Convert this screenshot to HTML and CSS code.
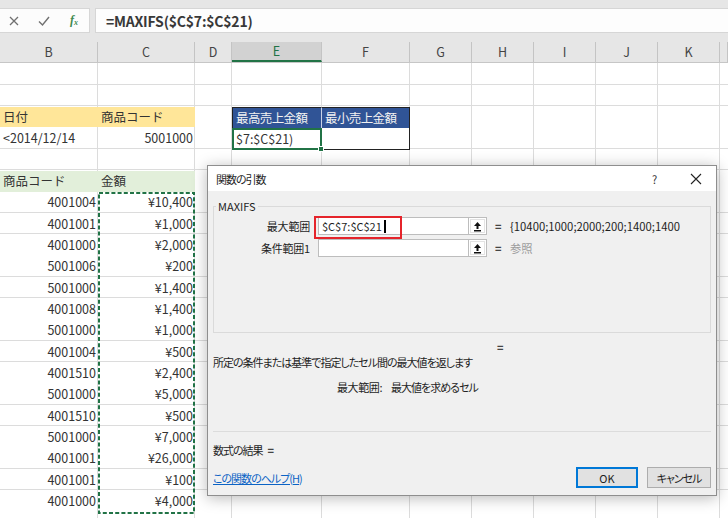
FILE: index.html
```html
<!DOCTYPE html>
<html lang="ja">
<head>
<meta charset="utf-8">
<title>関数の引数</title>
<link rel="stylesheet" href="styles.css">
</head>
<body>
<div class="app">
  <div class="fbar">
    <div class="fbtns">
      <svg class="ico" width="12" height="12" viewBox="0 0 12 12"><path d="M2 2L10 10M10 2L2 10" stroke="#707070" stroke-width="1.3" fill="none"/></svg>
      <svg class="ico" width="14" height="12" viewBox="0 0 14 12"><path d="M2 6.5L5.5 10L12 2" stroke="#707070" stroke-width="1.4" fill="none"/></svg>
      <span class="fx">f<sub>x</sub></span>
    </div>
    <div class="finput">=MAXIFS($C$7:$C$21)</div>
  </div>

  <div class="colhead">
    <div class="h">B</div><div class="h">C</div><div class="h">D</div><div class="h sel">E</div><div class="h">F</div><div class="h">G</div><div class="h">H</div><div class="h">I</div><div class="h">J</div><div class="h">K</div><div class="h"></div>
  </div>

  <div class="sheet">
    <div class="row"></div>
    <div class="row"></div>
    <div class="row">
      <div class="c yel">日付</div><div class="c yel">商品コード</div>
      <div class="c e blue b-tl">最高売上金額</div><div class="c blue b-tr">最小売上金額</div>
    </div>
    <div class="row">
      <div class="c">&lt;2014/12/14</div><div class="c num">5001000</div>
      <div class="c e active">$7:$C$21)<span class="handle"></span></div><div class="c boxed"></div>
    </div>
    <div class="row"></div>
    <div class="row">
      <div class="c grn">商品コード</div><div class="c grn">金額</div>
    </div>
    <div class="row"><div class="c num">4001004</div><div class="c num">¥10,400</div></div>
    <div class="row"><div class="c num">4001001</div><div class="c num">¥1,000</div></div>
    <div class="row"><div class="c num">4001000</div><div class="c num">¥2,000</div></div>
    <div class="row"><div class="c num">5001006</div><div class="c num">¥200</div></div>
    <div class="row"><div class="c num">5001000</div><div class="c num">¥1,400</div></div>
    <div class="row"><div class="c num">4001008</div><div class="c num">¥1,400</div></div>
    <div class="row"><div class="c num">5001000</div><div class="c num">¥1,000</div></div>
    <div class="row"><div class="c num">4001004</div><div class="c num">¥500</div></div>
    <div class="row"><div class="c num">4001510</div><div class="c num">¥2,400</div></div>
    <div class="row"><div class="c num">5001000</div><div class="c num">¥5,000</div></div>
    <div class="row"><div class="c num">4001510</div><div class="c num">¥500</div></div>
    <div class="row"><div class="c num">5001000</div><div class="c num">¥7,000</div></div>
    <div class="row"><div class="c num">4001001</div><div class="c num">¥26,000</div></div>
    <div class="row"><div class="c num">4001001</div><div class="c num">¥100</div></div>
    <div class="row"><div class="c num">4001000</div><div class="c num">¥4,000</div></div>
    <div class="row"></div>

    <svg class="ants" width="97" height="322" viewBox="0 0 97 322">
      <rect x="1" y="1" width="95" height="320" fill="none" stroke="#217346" stroke-width="2" stroke-dasharray="4 2.2"/>
    </svg>
  </div>

  <div class="dialog">
    <div class="dtitle">
      <span class="ttext jp">関数の引数</span>
      <span class="help">?</span>
      <svg class="close" width="12" height="12" viewBox="0 0 12 12"><path d="M1 1L11 11M11 1L1 11" stroke="#222" stroke-width="1.1" fill="none"/></svg>
    </div>
    <div class="dbody">
      <fieldset class="group">
        <legend>MAXIFS</legend>
        <div class="arg">
          <span class="alabel">最大範囲</span>
          <div class="field"><span class="ftext">$C$7:$C$21</span><span class="caret"></span></div>
          <span class="refbtn"><svg width="9" height="11" viewBox="0 0 9 11"><path d="M4.5 1L8 5H5.5V8H3.5V5H1Z" fill="#111"/><rect x="1" y="9" width="7" height="1.5" fill="#111"/></svg></span>
          <span class="eq">=</span>
          <span class="aval">{10400;1000;2000;200;1400;1400</span>
        </div>
        <div class="arg">
          <span class="alabel">条件範囲1</span>
          <div class="field"></div>
          <span class="refbtn"><svg width="9" height="11" viewBox="0 0 9 11"><path d="M4.5 1L8 5H5.5V8H3.5V5H1Z" fill="#111"/><rect x="1" y="9" width="7" height="1.5" fill="#111"/></svg></span>
          <span class="eq">=</span>
          <span class="aval muted">参照</span>
        </div>
      </fieldset>
      <div class="loneeq">=</div>
      <p class="desc jp">所定の条件または基準で指定したセル間の最大値を返します</p>
      <p class="argdesc"><span class="adname">最大範囲:</span><span class="jp">最大値を求めるセル</span></p>
      <div class="sep"></div>
      <p class="result"><span class="jp">数式の結果</span><span class="req">=</span></p>
      <div class="footer">
        <a class="helplink jp" href="#">この関数のヘルプ(H)</a>
        <span class="btn ok">OK</span>
        <span class="btn jp">キャンセル</span>
      </div>
    </div>
    <div class="redbox"></div>
  </div>
</div>
</body>
</html>
```

FILE: styles.css
```css
* { box-sizing: border-box; margin: 0; padding: 0; }
html, body { width: 728px; height: 518px; overflow: hidden; }
body {
  background: #fff;
  font-family: "Noto Sans CJK JP", "Noto Sans", sans-serif;
  color: #333;
}
.app { position: relative; display: flex; flex-direction: column; height: 518px; }

/* formula bar */
.fbar {
  flex: none;
  height: 42px;
  background: #e6e6e6;
  display: flex;
  gap: 5px;
  padding: 8px 0 9px 0;
}
.fbtns {
  width: 90px;
  background: #fcfcfc;
  border: 1px solid #d6d6d6;
  border-left: none;
  display: flex;
  align-items: center;
  padding-left: 8px;
  gap: 17px;
}
.fx {
  font-family: "Liberation Serif", serif;
  font-style: italic;
  font-size: 12px;
  color: #3f8a4f;
  font-weight: bold;
  margin-left: 2px;
}
.fx sub { font-size: 8px; vertical-align: -1px; }
.finput {
  flex: 1;
  background: #fdfdfd;
  border: 1px solid #d6d6d6;
  border-right: none;
  display: flex;
  align-items: center;
  padding-left: 10px;
  font-size: 14px;
  font-weight: bold;
  color: #383838;
  letter-spacing: -0.2px;
}

/* column header */
.colhead {
  flex: none;
  height: 21px;
  display: grid;
  grid-template-columns: 98px 97px 37px 90px 88px 62px 62px 62px 62px 62px 8px;
  background: #e6e6e6;
  border-bottom: 1px solid #c6c6c6;
}
.h {
  border-right: 1px solid #c4c4c4;
  font-size: 12.5px;
  line-height: 20px;
  text-align: center;
  color: #444;
}
.h.sel {
  background: #d2d2d2;
  color: #217346;
  border-bottom: 2px solid #217346;
  line-height: 18px;
}

/* sheet */
.sheet {
  position: relative;
  flex: 1;
  min-height: 0;
  overflow: hidden;
  display: flex;
  flex-direction: column;
  padding-top: 1px;
  background:
    linear-gradient(#dcdcdc, #dcdcdc) 97px 0 / 1px 100% no-repeat,
    linear-gradient(#dcdcdc, #dcdcdc) 194px 0 / 1px 100% no-repeat,
    linear-gradient(#dcdcdc, #dcdcdc) 231px 0 / 1px 100% no-repeat,
    linear-gradient(#dcdcdc, #dcdcdc) 321px 0 / 1px 100% no-repeat,
    linear-gradient(#dcdcdc, #dcdcdc) 409px 0 / 1px 100% no-repeat,
    linear-gradient(#dcdcdc, #dcdcdc) 471px 0 / 1px 100% no-repeat,
    linear-gradient(#dcdcdc, #dcdcdc) 533px 0 / 1px 100% no-repeat,
    linear-gradient(#dcdcdc, #dcdcdc) 595px 0 / 1px 100% no-repeat,
    linear-gradient(#dcdcdc, #dcdcdc) 657px 0 / 1px 100% no-repeat,
    linear-gradient(#dcdcdc, #dcdcdc) 719px 0 / 1px 100% no-repeat,
    repeating-linear-gradient(to bottom,
      transparent 0 22px, #dcdcdc 22px 23px,
      transparent 23px 43px, #dcdcdc 43px 44px,
      transparent 44px 64px, #dcdcdc 64px 65px) 0 -1px / 100% 64px;
}
.row {
  flex: none;
  height: 21px;
  display: grid;
  grid-template-columns: 98px 97px 37px 90px 88px 62px 62px 62px 62px 62px 8px;
}
.row:nth-child(3n+1) { height: 22px; }
.c {
  font-size: 12.5px;
  line-height: 20px;
  padding: 0 3px;
  white-space: nowrap;
  overflow: hidden;
  color: #333;
}
.num { text-align: right; padding-right: 2px; }
.e { grid-column: 4; }
.yel { background: #ffe699; margin-bottom: 1px; }
.grn { background: #e2efda; }
.blue {
  background: #305496;
  color: #f2f2f2;
  border-top: 1px solid #222;
  letter-spacing: -0.6px;
}
.b-tl { border-left: 1px solid #222; border-right: 1px solid #c9d3e6; }
.b-tr { border-right: 1px solid #222; }
.active {
  position: relative;
  overflow: visible;
  background: #fff;
  border: 2px solid #217346;
  line-height: 17px;
  padding-left: 2px;
}
.handle {
  position: absolute;
  right: -4px;
  bottom: -4px;
  width: 6px;
  height: 6px;
  background: #217346;
  border: 1px solid #fff;
}
.boxed {
  background: #fff;
  border-right: 1px solid #222;
  border-bottom: 1px solid #222;
}
.ants {
  position: absolute;
  left: 98px;
  top: 129px;
}

/* dialog */
.dialog {
  position: absolute;
  left: 207px;
  top: 165px;
  width: 510px;
  height: 331px;
  background: #f0f0f0;
  border: 1px solid #8e8e8e;
  box-shadow: 0 2px 14px rgba(0, 0, 0, 0.28);
  display: flex;
  flex-direction: column;
  font-size: 11px;
  font-feature-settings: "palt";
  color: #1e1e1e;
}
.jp { letter-spacing: -1px; }
.dtitle {
  height: 25px;
  background: #fff;
  display: flex;
  align-items: center;
  padding-left: 8px;
  font-size: 11px;
}
.ttext { flex: 1; }
.help { font-size: 11px; width: 12px; margin-right: 26px; color: #333; }
.close { margin-right: 14px; }
.dbody {
  flex: 1;
  display: flex;
  flex-direction: column;
  padding: 0 5px;
}
.group {
  margin-top: 9px;
  height: 133px;
  border: 1px solid #dadada;
  padding: 0;
}
.group legend {
  margin-left: 2px;
  padding: 0 2px;
  font-size: 11px;
  line-height: 12px;
}
.arg {
  display: flex;
  align-items: center;
  height: 18px;
  margin-top: 4px;
}
.arg:first-of-type { margin-top: 5px; }
.alabel { width: 97px; text-align: right; padding-right: 1px; letter-spacing: -0.2px; }
.field {
  margin-left: 7px;
  width: 150px;
  height: 18px;
  background: #fff;
  border: 1px solid #bdbdbd;
  border-right: none;
  display: flex;
  align-items: center;
  padding-left: 3px;
  font-size: 11px;
}
.caret { width: 2px; height: 13px; background: #000; margin-left: 2px; }
.refbtn {
  width: 19px;
  height: 18px;
  background: #fff;
  border: 1px solid #bdbdbd;
  display: flex;
  align-items: center;
  justify-content: center;
  box-shadow: inset 0 0 0 1px #fff, inset 0 0 0 2px #e3e3e3;
}
.eq { margin-left: 8px; width: 15px; font-weight: bold; color: #444; }
.aval {
  width: 170px;
  overflow: hidden;
  white-space: nowrap;
  font-size: 11.3px;
}
.muted { color: #9c9c9c; }
.loneeq {
  margin-top: 7px;
  height: 14px;
  line-height: 14px;
  padding-left: 284px;
  font-weight: bold;
  color: #444;
}
.desc { margin-top: 1px; line-height: 14px; height: 14px; }
.argdesc { margin-top: 11px; line-height: 14px; height: 14px; padding-left: 124px; display: flex; }
.adname { width: 54px; letter-spacing: -0.4px; }
.sep { margin-top: 37px; height: 1px; background: #dcdcdc; }
.result { margin-top: 11px; line-height: 14px; height: 14px; display: flex; }
.req { margin-left: 5px; font-weight: bold; color: #444; }
.footer {
  margin-top: 10px;
  height: 21px;
  display: flex;
  align-items: center;
  gap: 9px;
}
.helplink {
  flex: 1;
  color: #0b63c5;
  text-decoration: underline;
}
.btn {
  width: 64px;
  height: 21px;
  background: #e1e1e1;
  border: 1px solid #adadad;
  display: flex;
  align-items: center;
  justify-content: center;
  font-size: 11px;
}
.btn.ok { width: 62px; border: 2px solid #0078d7; }
.redbox {
  position: absolute;
  left: 106px;
  top: 50px;
  width: 88px;
  height: 23px;
  border: 2px solid #e5242b;
}
```
